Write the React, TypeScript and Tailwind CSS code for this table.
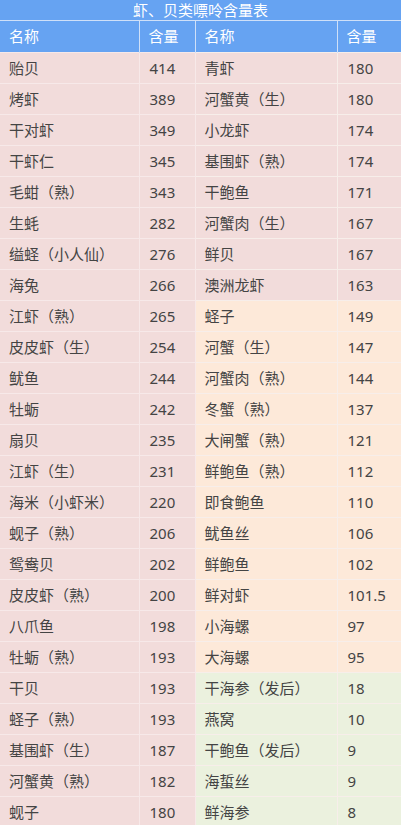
import React from "react";

type Row = { a: string; an: string; b: string; bn: string; tone: "pink" | "peach" | "green" };

const rows: Row[] = [
  { a: "贻贝", an: "414", b: "青虾", bn: "180", tone: "pink" },
  { a: "烤虾", an: "389", b: "河蟹黄（生）", bn: "180", tone: "pink" },
  { a: "干对虾", an: "349", b: "小龙虾", bn: "174", tone: "pink" },
  { a: "干虾仁", an: "345", b: "基围虾（熟）", bn: "174", tone: "pink" },
  { a: "毛蚶（熟）", an: "343", b: "干鲍鱼", bn: "171", tone: "pink" },
  { a: "生蚝", an: "282", b: "河蟹肉（生）", bn: "167", tone: "pink" },
  { a: "缢蛏（小人仙）", an: "276", b: "鲜贝", bn: "167", tone: "pink" },
  { a: "海兔", an: "266", b: "澳洲龙虾", bn: "163", tone: "pink" },
  { a: "江虾（熟）", an: "265", b: "蛏子", bn: "149", tone: "peach" },
  { a: "皮皮虾（生）", an: "254", b: "河蟹（生）", bn: "147", tone: "peach" },
  { a: "鱿鱼", an: "244", b: "河蟹肉（熟）", bn: "144", tone: "peach" },
  { a: "牡蛎", an: "242", b: "冬蟹（熟）", bn: "137", tone: "peach" },
  { a: "扇贝", an: "235", b: "大闸蟹（熟）", bn: "121", tone: "peach" },
  { a: "江虾（生）", an: "231", b: "鲜鲍鱼（熟）", bn: "112", tone: "peach" },
  { a: "海米（小虾米）", an: "220", b: "即食鲍鱼", bn: "110", tone: "peach" },
  { a: "蚬子（熟）", an: "206", b: "鱿鱼丝", bn: "106", tone: "peach" },
  { a: "鸳鸯贝", an: "202", b: "鲜鲍鱼", bn: "102", tone: "peach" },
  { a: "皮皮虾（熟）", an: "200", b: "鲜对虾", bn: "101.5", tone: "peach" },
  { a: "八爪鱼", an: "198", b: "小海螺", bn: "97", tone: "peach" },
  { a: "牡蛎（熟）", an: "193", b: "大海螺", bn: "95", tone: "peach" },
  { a: "干贝", an: "193", b: "干海参（发后）", bn: "18", tone: "green" },
  { a: "蛏子（熟）", an: "193", b: "燕窝", bn: "10", tone: "green" },
  { a: "基围虾（生）", an: "187", b: "干鲍鱼（发后）", bn: "9", tone: "green" },
  { a: "河蟹黄（熟）", an: "182", b: "海蜇丝", bn: "9", tone: "green" },
  { a: "蚬子", an: "180", b: "鲜海参", bn: "8", tone: "green" },
];

const toneBg = {
  pink: "bg-[#f2dcdb]",
  peach: "bg-[#fde9d9]",
  green: "bg-[#ebf1de]",
};

export default function App() {
  return (
    <div
      className="w-[403px] h-[825px] overflow-hidden bg-white text-[15px] text-[#444]"
      style={{ fontFamily: '"Noto Sans", "Noto Sans CJK SC", sans-serif' }}
    >
      <table className="w-[401px] table-fixed border-collapse">
        <colgroup>
          <col className="w-[139px]" />
          <col className="w-[56px]" />
          <col className="w-[142px]" />
          <col className="w-[64px]" />
        </colgroup>
        <thead>
          <tr className="bg-[#66a3f2] text-white">
            <th colSpan={4} className="h-[20px] p-0 text-center font-normal leading-[20px] border-b border-[#cfe0f8]">
              虾、贝类嘌呤含量表
            </th>
          </tr>
          <tr className="bg-[#66a3f2] text-white h-[32px]">
            {["名称", "含量", "名称", "含量"].map((t, i) => (
              <th
                key={i}
                className="px-[9px] py-0 text-left font-normal border-r border-[#cfe0f8] last:border-r-0"
              >
                {t}
              </th>
            ))}
          </tr>
        </thead>
        <tbody>
          {rows.map((r, idx) => (
            <tr key={idx} className="h-[31px]">
              <td className="bg-[#f2dcdb] px-[9px] py-0 border-t border-r border-[#f7e9e9] whitespace-nowrap">{r.a}</td>
              <td className="bg-[#f2dcdb] px-[10px] py-0 border-t border-r border-[#f7e9e9]">{r.an}</td>
              <td className={`${toneBg[r.tone]} px-[9px] py-0 border-t border-r border-[#f7eeea] whitespace-nowrap`}>{r.b}</td>
              <td className={`${toneBg[r.tone]} px-[10px] py-0 border-t border-[#f7eeea]`}>{r.bn}</td>
            </tr>
          ))}
        </tbody>
      </table>
    </div>
  );
}
